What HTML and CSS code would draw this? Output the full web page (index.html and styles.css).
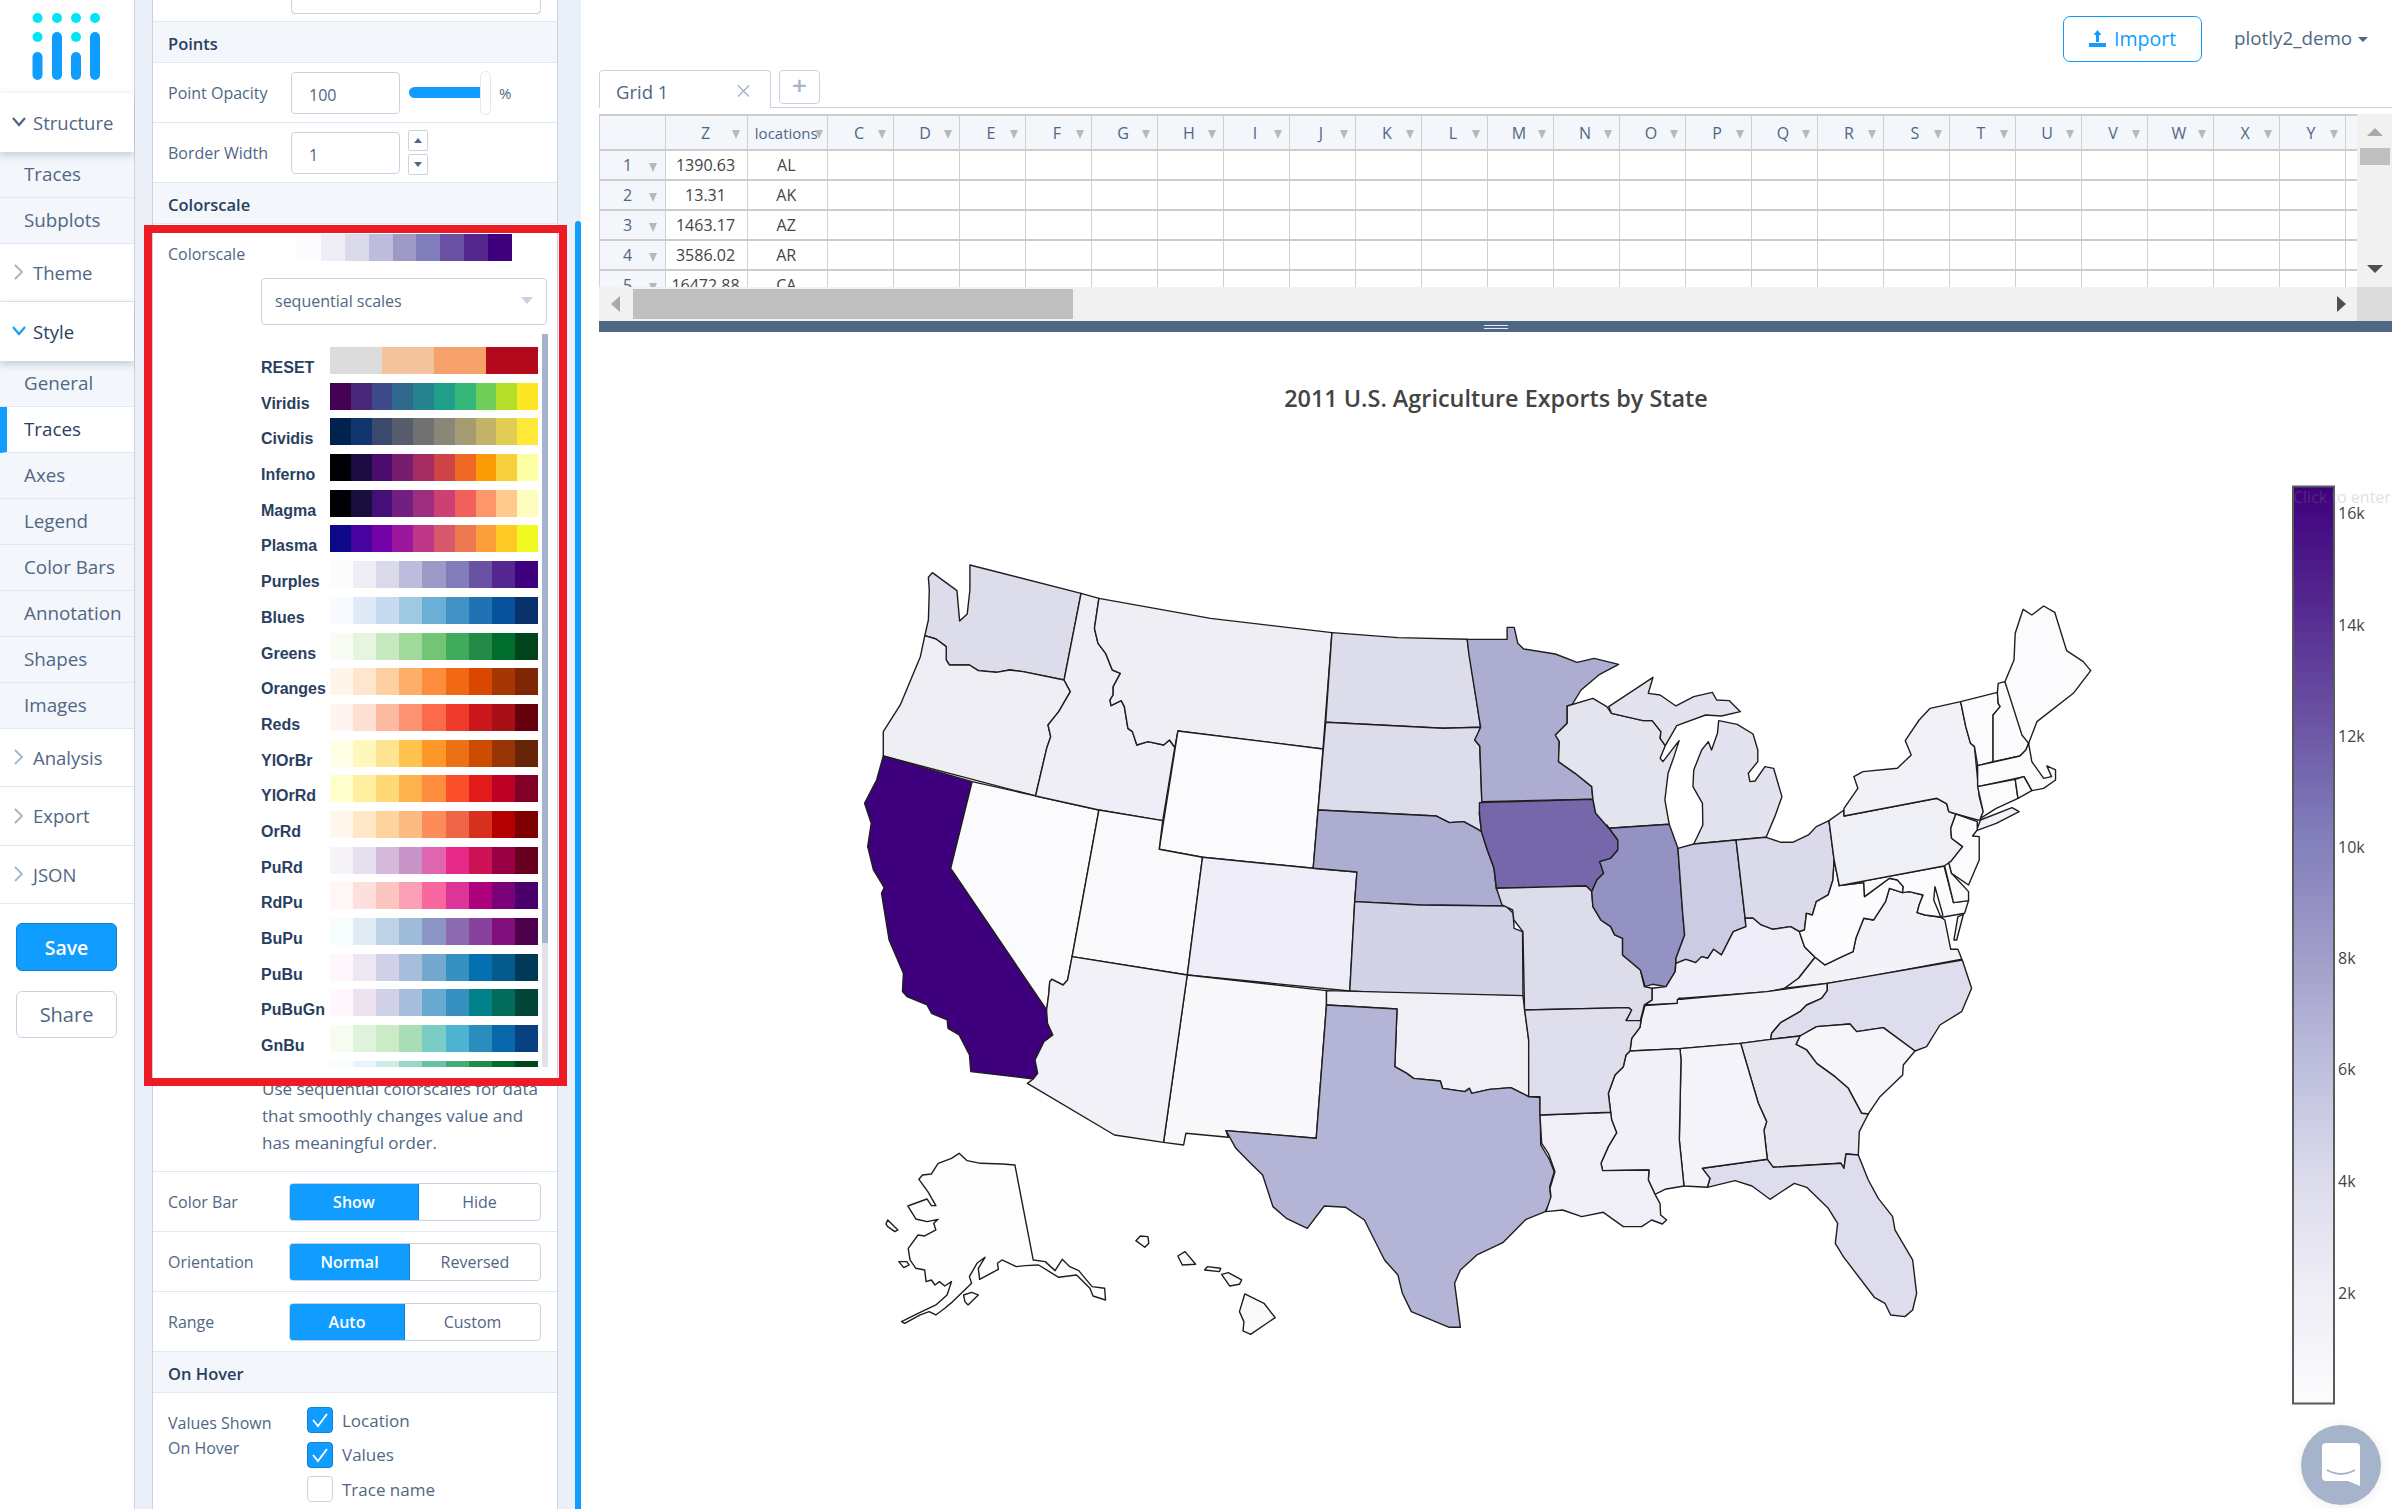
FILE: index.html
```html
<!DOCTYPE html>
<html lang="en">
<head>
    <meta charset="UTF-8">
    <title>Chart Studio</title>
    <link rel="stylesheet" href="styles.css">
</head>
<body>
<div class="app">
    <!-- Left navigation -->
    <nav class="sidebar">
        <div class="logo">
            <svg width="134" height="93" viewBox="0 0 134 93">
                <g fill="#00e5f5">
                    <circle cx="37.5" cy="18" r="5"/><circle cx="57" cy="18" r="5"/><circle cx="76" cy="18" r="5"/><circle cx="95" cy="18" r="5"/>
                    <circle cx="37.5" cy="37" r="5"/><circle cx="76" cy="37" r="5"/>
                </g>
                <g fill="#119dff">
                    <rect x="32.5" y="52" width="10" height="28" rx="5"/><rect x="52" y="32" width="10" height="48" rx="5"/>
                    <rect x="71" y="52" width="10" height="28" rx="5"/><rect x="90" y="32" width="10" height="48" rx="5"/>
                </g>
            </svg>
        </div>
        <div class="nav-head open">
            <svg class="chev" width="16" height="12" viewBox="0 0 16 12"><path d="M2 2l6 7 6-7" fill="none" stroke="#506784" stroke-width="2.2"/></svg>
            Structure
        </div>
        <div class="nav-item">Traces</div>
        <div class="nav-item">Subplots</div>
        <div class="nav-head">
            <svg class="chev" width="16" height="16" viewBox="0 0 16 16"><path d="M4 1l7 7-7 7" fill="none" stroke="#a5b4ca" stroke-width="1.8"/></svg>
            Theme
        </div>
        <div class="nav-head open active">
            <svg class="chev" width="16" height="12" viewBox="0 0 16 12"><path d="M2 2l6 7 6-7" fill="none" stroke="#119dff" stroke-width="2.2"/></svg>
            Style
        </div>
        <div class="nav-item">General</div>
        <div class="nav-item selected">Traces</div>
        <div class="nav-item">Axes</div>
        <div class="nav-item">Legend</div>
        <div class="nav-item">Color Bars</div>
        <div class="nav-item">Annotation</div>
        <div class="nav-item">Shapes</div>
        <div class="nav-item">Images</div>
        <div class="nav-head">
            <svg class="chev" width="16" height="16" viewBox="0 0 16 16"><path d="M4 1l7 7-7 7" fill="none" stroke="#a5b4ca" stroke-width="1.8"/></svg>
            Analysis
        </div>
        <div class="nav-head">
            <svg class="chev" width="16" height="16" viewBox="0 0 16 16"><path d="M4 1l7 7-7 7" fill="none" stroke="#a5b4ca" stroke-width="1.8"/></svg>
            Export
        </div>
        <div class="nav-head">
            <svg class="chev" width="16" height="16" viewBox="0 0 16 16"><path d="M4 1l7 7-7 7" fill="none" stroke="#a5b4ca" stroke-width="1.8"/></svg>
            JSON
        </div>
        <div class="nav-buttons">
            <button class="btn-save">Save</button>
            <button class="btn-share">Share</button>
        </div>
    </nav>

    <!-- Style panel -->
    <aside class="panel">
        <div class="panel-body">
            <div class="stub"><div class="stub-input"></div></div>

            <div class="section-head">Points</div>
            <div class="field">
                <label class="field-label">Point Opacity</label>
                <div class="num-input">100</div>
                <div class="slider-fill"></div>
                <div class="slider-handle"></div>
                <span class="unit">%</span>
            </div>
            <div class="field">
                <label class="field-label">Border Width</label>
                <div class="num-input">1</div>
                <div class="spinner">
                    <span class="spin-btn"><i class="tri-up"></i></span>
                    <span class="spin-btn"><i class="tri-down"></i></span>
                </div>
            </div>

            <div class="section-head">Colorscale</div>
            <div class="colorscale">
                <div class="cs-current">
                    <label class="field-label">Colorscale</label>
                    <div class="cs-swatch purples"></div>
                </div>
                <div class="cs-select">sequential scales <i class="select-arrow"></i></div>
                <div class="cs-list">
                    <div class="cs-rows">
                        <div class="cs-row"><span class="cs-name">RESET</span><div class="cs-bar reset"></div></div>
                        <div class="cs-row"><span class="cs-name">Viridis</span><div class="cs-bar viridis"></div></div>
                        <div class="cs-row"><span class="cs-name">Cividis</span><div class="cs-bar cividis"></div></div>
                        <div class="cs-row"><span class="cs-name">Inferno</span><div class="cs-bar inferno"></div></div>
                        <div class="cs-row"><span class="cs-name">Magma</span><div class="cs-bar magma"></div></div>
                        <div class="cs-row"><span class="cs-name">Plasma</span><div class="cs-bar plasma"></div></div>
                        <div class="cs-row"><span class="cs-name">Purples</span><div class="cs-bar purples"></div></div>
                        <div class="cs-row"><span class="cs-name">Blues</span><div class="cs-bar blues"></div></div>
                        <div class="cs-row"><span class="cs-name">Greens</span><div class="cs-bar greens"></div></div>
                        <div class="cs-row"><span class="cs-name">Oranges</span><div class="cs-bar oranges"></div></div>
                        <div class="cs-row"><span class="cs-name">Reds</span><div class="cs-bar reds"></div></div>
                        <div class="cs-row"><span class="cs-name">YlOrBr</span><div class="cs-bar ylorbr"></div></div>
                        <div class="cs-row"><span class="cs-name">YlOrRd</span><div class="cs-bar ylorrd"></div></div>
                        <div class="cs-row"><span class="cs-name">OrRd</span><div class="cs-bar orrd"></div></div>
                        <div class="cs-row"><span class="cs-name">PuRd</span><div class="cs-bar purd"></div></div>
                        <div class="cs-row"><span class="cs-name">RdPu</span><div class="cs-bar rdpu"></div></div>
                        <div class="cs-row"><span class="cs-name">BuPu</span><div class="cs-bar bupu"></div></div>
                        <div class="cs-row"><span class="cs-name">PuBu</span><div class="cs-bar pubu"></div></div>
                        <div class="cs-row"><span class="cs-name">PuBuGn</span><div class="cs-bar pubugn"></div></div>
                        <div class="cs-row"><span class="cs-name">GnBu</span><div class="cs-bar gnbu"></div></div>
                        <div class="cs-row"><span class="cs-name">BuGn</span><div class="cs-bar bugn"></div></div>
                    </div>
                    <div class="cs-track"><div class="cs-thumb"></div></div>
                </div>
                <p class="cs-note">Use sequential colorscales for data that smoothly changes value and has meaningful order.</p>
            </div>

            <div class="field">
                <label class="field-label">Color Bar</label>
                <div class="toggle">
                    <span class="toggle-on w-show">Show</span><span class="toggle-off">Hide</span>
                </div>
            </div>
            <div class="field">
                <label class="field-label">Orientation</label>
                <div class="toggle">
                    <span class="toggle-on w-normal">Normal</span><span class="toggle-off">Reversed</span>
                </div>
            </div>
            <div class="field">
                <label class="field-label">Range</label>
                <div class="toggle">
                    <span class="toggle-on w-auto">Auto</span><span class="toggle-off">Custom</span>
                </div>
            </div>

            <div class="section-head">On Hover</div>
            <div class="hover-field">
                <label class="hover-label">Values Shown<br>On Hover</label>
                <div class="checks">
                    <div class="check"><span class="box on"><svg width="20" height="20" viewBox="0 0 20 20"><path d="M3 10l5 6 9-12" fill="none" stroke="#fff" stroke-width="1.8"/></svg></span>Location</div>
                    <div class="check"><span class="box on"><svg width="20" height="20" viewBox="0 0 20 20"><path d="M3 10l5 6 9-12" fill="none" stroke="#fff" stroke-width="1.8"/></svg></span>Values</div>
                    <div class="check"><span class="box"></span>Trace name</div>
                </div>
            </div>
        </div>
        <div class="panel-scroll"><div class="panel-thumb"></div></div>
        <!-- Annotation frame drawn over the screenshot -->
        <div class="red-frame"></div>
    </aside>

    <!-- Grid and chart -->
    <main class="main">
        <div class="topbar">
            <button class="btn-import">
                <svg width="17" height="17" viewBox="0 0 17 17"><path d="M0 13h17v4H0zM8.5 0l4 5H10v7H7V5H4.500z" fill="#119dff"/></svg>
                Import
            </button>
            <div class="user">plotly2_demo <i class="tri-down dark"></i></div>
        </div>
        <div class="tabs">
            <div class="tab">Grid 1 <svg width="13" height="12" viewBox="0 0 13 12"><path d="M1 .5l11 11M12 .5l-11 11" fill="none" stroke="#a5b4ca" stroke-width="1.5"/></svg></div>
            <div class="tab-add">+</div>
        </div>
        <div class="sheet">
            <div class="sheet-cells">
                <table>
                    <colgroup><col class="c-row"><col class="c-z"><col class="c-loc"><col span="23" class="c-std"><col class="c-end"></colgroup>
                    <tr class="head-row"><th></th><th>Z<i></i></th><th class="narrow">locations<i></i></th><th>C<i></i></th><th>D<i></i></th><th>E<i></i></th><th>F<i></i></th><th>G<i></i></th><th>H<i></i></th><th>I<i></i></th><th>J<i></i></th><th>K<i></i></th><th>L<i></i></th><th>M<i></i></th><th>N<i></i></th><th>O<i></i></th><th>P<i></i></th><th>Q<i></i></th><th>R<i></i></th><th>S<i></i></th><th>T<i></i></th><th>U<i></i></th><th>V<i></i></th><th>W<i></i></th><th>X<i></i></th><th>Y<i></i></th><th></th></tr>
                    <tr><th class="row-num">1<i></i></th><td>1390.63</td><td>AL</td><td></td><td></td><td></td><td></td><td></td><td></td><td></td><td></td><td></td><td></td><td></td><td></td><td></td><td></td><td></td><td></td><td></td><td></td><td></td><td></td><td></td><td></td><td></td><td></td></tr>
                    <tr><th class="row-num">2<i></i></th><td>13.31</td><td>AK</td><td></td><td></td><td></td><td></td><td></td><td></td><td></td><td></td><td></td><td></td><td></td><td></td><td></td><td></td><td></td><td></td><td></td><td></td><td></td><td></td><td></td><td></td><td></td><td></td></tr>
                    <tr><th class="row-num">3<i></i></th><td>1463.17</td><td>AZ</td><td></td><td></td><td></td><td></td><td></td><td></td><td></td><td></td><td></td><td></td><td></td><td></td><td></td><td></td><td></td><td></td><td></td><td></td><td></td><td></td><td></td><td></td><td></td><td></td></tr>
                    <tr><th class="row-num">4<i></i></th><td>3586.02</td><td>AR</td><td></td><td></td><td></td><td></td><td></td><td></td><td></td><td></td><td></td><td></td><td></td><td></td><td></td><td></td><td></td><td></td><td></td><td></td><td></td><td></td><td></td><td></td><td></td><td></td></tr>
                    <tr><th class="row-num">5<i></i></th><td>16472.88</td><td>CA</td><td></td><td></td><td></td><td></td><td></td><td></td><td></td><td></td><td></td><td></td><td></td><td></td><td></td><td></td><td></td><td></td><td></td><td></td><td></td><td></td><td></td><td></td><td></td><td></td></tr>
                </table>
            </div>
            <div class="vscroll"><i class="arrow-up"></i><div class="vthumb"></div><i class="arrow-down"></i></div>
            <div class="hscroll"><i class="arrow-left"></i><div class="hthumb"></div><i class="arrow-right"></i></div>
            <div class="corner"></div>
        </div>
        <div class="resizer"><div class="grip"></div></div>

        <!-- Chart: viewBox uses page pixels; each map group is in its own scaled coordinates -->
        <svg class="chart" width="1793" height="1177" viewBox="599 332 1793 1177">
            <text class="chart-title" x="1496" y="407" text-anchor="middle">2011 U.S. Agriculture Exports by State</text>

            <g class="states" transform="translate(840 540) scale(.4464 .3333)">
                <polygon fill="#dcdcea" points="291,75 540,160 502,420 410,395 380,390 350,397 310,392 290,375 245,375 238,360 238,320 215,297 190,287 198,240 200,150 198,112 207,98 262,152 268,243 285,222 291,150"/>
                <polygon fill="#efeef5" points="190,287 215,297 238,320 238,360 245,375 290,375 310,392 350,397 380,390 410,395 502,420 516,455 490,515 466,555 472,590 463,625 438,768 97,648 97,575 135,495 180,350"/>
                <polygon fill="#3f007d" points="97,648 296,725 248,985 463,1410 465,1450 477,1485 457,1505 437,1560 443,1600 433,1617 293,1595 290,1545 267,1485 242,1465 240,1440 205,1420 195,1395 150,1370 140,1355 142,1300 110,1200 93,1060 99,1043 75,990 62,920 70,850 55,790 82,720"/>
                <polygon fill="#fbfbfd" points="296,725 580,810 520,1250 510,1320 500,1335 475,1318 470,1325 468,1360 463,1410 248,985"/>
                <polygon fill="#efeef7" points="540,160 580,175 570,265 578,310 595,340 610,390 628,400 612,440 612,465 605,480 607,497 630,482 637,500 645,565 655,575 665,615 690,605 725,615 738,600 750,622 723,842 580,810 438,768 463,625 472,590 466,555 490,515 516,455 502,420"/>
                <polygon fill="#efeef5" points="580,175 830,235 1102,278 1082,627 757,573 750,622 738,600 725,615 690,605 665,615 655,575 645,565 637,500 630,482 607,497 605,480 612,465 612,440 628,400 610,390 595,340 578,310 570,265"/>
                <polygon fill="#fbfbfd" points="757,573 1082,627 1060,985 812,952 715,928"/>
                <polygon fill="#f9f9fc" points="580,810 723,842 715,928 812,952 778,1305 520,1250"/>
                <polygon fill="#efeef8" points="812,952 1060,985 1158,996 1153,1085 1142,1353 778,1305"/>
                <polygon fill="#dcdcea" points="1102,278 1250,293 1405,298 1435,562 1350,565 1088,547"/>
                <polygon fill="#dcdcea" points="1088,547 1350,565 1435,562 1430,580 1422,600 1433,618 1438,785 1432,820 1437,875 1425,865 1397,845 1365,848 1335,828 1071,810"/>
                <polygon fill="#adadd2" points="1071,810 1335,828 1365,848 1397,845 1425,865 1437,875 1450,930 1465,985 1470,1045 1492,1098 1300,1095 1153,1085 1158,996 1060,985"/>
                <polygon fill="#d2d3e7" points="1153,1085 1300,1095 1492,1098 1508,1120 1510,1165 1529,1175 1530,1367 1300,1365 1142,1353"/>
            </g>

            <g class="states" transform="translate(860 1000) scale(.4464 .3333)">
                <polygon fill="#f8f8fb" points="733,-75 1045,-28 1045,15 1022,415 820,392 825,412 730,400 725,435 680,427"/>
                <polygon fill="#f2f1f7" points="475,-130 733,-75 680,427 570,405 375,250 388,237 398,220 392,180 412,125 432,105 420,70 418,30 423,-20 425,-55 430,-62 455,-45 465,-60"/>
                <polygon fill="#f0eff6" points="1045,-28 1485,-13 1498,120 1498,290 1458,263 1410,268 1370,280 1365,265 1355,275 1305,265 1300,243 1240,235 1225,220 1198,200 1203,27 1045,15"/>
                <polygon fill="#b4b4d6" points="1045,15 1203,27 1198,200 1225,220 1240,235 1300,243 1305,265 1355,275 1365,265 1370,280 1410,268 1458,263 1498,290 1523,293 1525,435 1545,480 1555,515 1545,560 1548,600 1535,635 1492,658 1440,728 1382,765 1345,810 1332,850 1345,982 1320,982 1235,935 1215,880 1205,825 1175,780 1130,660 1088,622 1040,618 1002,685 955,655 925,620 902,525 875,490 842,445 820,392 1022,415"/>
                <polygon fill="#fdfdfe" points="347,495 388,780 415,785 437,812 453,778 470,800 490,812 520,860 548,865 550,900 522,888 515,865 485,825 445,832 400,795 370,797 350,800 318,780 308,790 310,808 268,838 265,805 280,772 262,790 245,830 250,850 205,908 190,925 170,945 155,935 135,945 100,970 93,965 130,940 170,915 195,885 205,845 190,858 178,845 168,855 160,840 148,845 145,810 125,805 112,780 108,745 130,705 145,708 170,690 165,670 175,658 150,665 125,657 107,618 150,597 160,617 170,617 152,575 132,538 140,525 160,522 175,490 205,475 222,460 240,482 270,490 320,492"/>
                <polygon fill="#fdfdfe" points="58,672 62,660 85,690 78,695 62,680"/>
                <polygon fill="#fdfdfe" points="87,785 105,785 110,795 98,803"/>
                <polygon fill="#fdfdfe" points="232,885 250,877 265,885 242,915 235,905"/>
                <polygon fill="#f9f8fb" points="618,722 628,708 645,710 647,730 638,742"/>
                <polygon fill="#f9f8fb" points="712,768 728,755 752,793 722,795"/>
                <polygon fill="#f9f8fb" points="772,810 778,800 808,805 805,815"/>
                <polygon fill="#f9f8fb" points="810,823 825,818 855,840 850,853 828,858"/>
                <polygon fill="#f9f8fb" points="850,935 862,882 905,910 930,953 875,1003 858,993 860,965"/>
            </g>

            <g class="states" transform="translate(1500 580) scale(.3954 .3333)">
                <polygon fill="#adadd2" points="-83,178 18,178 18,142 36,142 45,190 60,207 140,222 195,247 238,235 300,253 250,285 205,330 182,375 170,378 170,430 140,465 150,485 148,545 190,580 232,620 235,658 -46,665 -51,498 -64,480 -49,442 -60,360 -71,280 -79,220"/>
                <polygon fill="#7667ab" points="-52,668 235,658 242,700 270,735 298,780 298,810 280,835 252,845 262,880 245,900 232,935 218,918 -9,925 -15,865 -32,810 -47,755 -52,700"/>
                <polygon fill="#dcdcea" points="-9,925 218,918 232,935 235,980 255,1020 280,1040 290,1065 310,1075 310,1125 355,1170 365,1220 385,1225 385,1260 365,1275 355,1322 318,1325 332,1290 325,1283 62,1290 58,1055 35,1020 32,990 5,975"/>
                <polygon fill="#e4e4ef" points="170,378 235,355 270,380 282,400 362,422 385,422 407,455 405,475 418,497 405,535 412,545 453,482 440,530 425,580 417,660 428,733 275,745 242,700 235,658 232,620 190,580 148,545 150,485 140,465 170,430"/>
                <polygon fill="#e3e3ef" points="275,380 387,292 375,340 405,345 445,378 490,350 537,337 548,360 580,362 608,395 560,408 520,405 447,437 418,497 405,475 407,455 385,422 362,422 282,400"/>
                <polygon fill="#e3e3ef" points="553,422 600,433 640,462 652,510 652,545 628,580 632,605 645,603 670,560 692,565 713,650 695,710 673,772 597,780 490,792 513,735 512,670 488,620 490,570 510,510 527,485 535,510 550,460"/>
                <polygon fill="#9491c3" points="275,745 428,733 450,805 462,1000 467,1065 445,1135 443,1175 420,1220 385,1213 367,1220 355,1170 310,1125 310,1075 290,1065 280,1040 255,1020 235,980 232,935 245,900 262,880 252,845 280,835 298,810 298,780 270,735"/>
                <polygon fill="#cbcbe3" points="450,805 490,792 597,780 620,1015 622,1040 590,1055 560,1125 540,1108 525,1135 510,1130 495,1148 470,1138 445,1150 445,1135 467,1065 462,1000"/>
                <polygon fill="#dadaea" points="597,780 673,772 710,787 740,787 780,765 800,740 832,722 845,840 842,900 830,945 800,965 790,1005 775,1000 770,1050 757,1055 735,1040 690,1048 660,1035 640,1015 620,1015"/>
                <polygon fill="#efeef8" points="445,1150 470,1138 495,1148 510,1130 525,1135 540,1108 560,1125 590,1055 622,1040 620,1015 640,1015 660,1035 690,1048 735,1040 757,1055 770,1100 797,1132 755,1195 720,1225 680,1235 462,1255 452,1255 452,1270 367,1275 385,1260 385,1225 420,1220 443,1175"/>
                <polygon fill="#f4f2f9" points="797,1132 822,1155 865,1130 893,1115 900,1075 920,1015 945,1020 975,965 985,925 1018,938 1035,935 1070,945 1060,975 1055,998 1075,1005 1115,1012 1125,1020 1140,1108 1158,1108 1168,1138 930,1190 830,1210 720,1225 755,1195"/>
                <polygon fill="#fcfcfe" points="845,840 858,917 920,908 922,950 985,895 1005,900 1020,920 1018,938 985,925 975,965 945,1020 920,1015 900,1075 893,1115 865,1130 822,1155 797,1132 770,1100 757,1055 770,1050 775,1000 790,1005 800,965 830,945 842,900"/>
                <polygon fill="#fbfbfd" points="858,917 1123,858 1147,968 1185,962 1175,1000 1118,1012 1075,1005 1055,998 1060,975 1070,945 1035,935 1018,938 1020,920 1005,900 985,895 922,950 920,908"/>
                <polygon fill="#fff" points="1100,920 1120,1005 1115,1012 1097,960"/>
                <polygon fill="#f4f2f9" points="1158,1010 1172,1003 1155,1080 1148,1080"/>
                <polygon fill="#fbfbfd" points="1123,850 1135,847 1142,880 1185,935 1185,962 1147,968"/>
                <polygon fill="#efeff6" points="832,722 870,690 870,708 1105,655 1130,672 1135,695 1153,702 1140,745 1142,775 1170,800 1140,845 1123,858 858,917 845,840"/>
                <polygon fill="#f3f1f8" points="870,708 870,685 905,625 895,590 918,575 1005,565 1040,525 1025,482 1060,420 1088,385 1165,365 1178,440 1190,490 1200,500 1212,650 1222,695 1215,720 1208,720 1153,702 1135,695 1130,672 1105,655"/>
                <polygon fill="#f3f1f8" points="1215,720 1295,683 1313,695 1255,730 1205,752"/>
                <polygon fill="#fbfbfd" points="1153,702 1207,725 1207,750 1195,768 1212,770 1212,840 1185,915 1142,880 1135,847 1140,845 1170,800 1142,775 1140,745"/>
                <polygon fill="#fbfbfd" points="1165,365 1258,337 1260,370 1265,380 1247,405 1247,545 1208,557 1200,500 1190,490 1178,440"/>
                <polygon fill="#fbfbfd" points="1258,337 1260,310 1277,305 1337,490 1330,510 1315,528 1247,545 1247,405 1265,380 1260,370"/>
                <polygon fill="#fbfbfd" points="1277,305 1300,240 1303,160 1323,88 1345,105 1375,78 1403,97 1433,212 1475,245 1494,272 1450,340 1358,425 1337,490 1320,465"/>
                <polygon fill="#fbfbfd" points="1208,557 1315,528 1330,510 1337,490 1345,545 1375,595 1395,590 1383,558 1405,570 1405,600 1375,625 1345,632 1325,590 1208,620"/>
                <polygon fill="#fbfbfd" points="1208,620 1303,598 1310,655 1255,685 1215,715 1222,695"/>
                <polygon fill="#fbfbfd" points="1303,598 1325,590 1345,632 1310,655"/>
            </g>

            <g class="states" transform="translate(1540 950) scale(.3333)">
                <polygon fill="#f2f2f8" points="315,167 412,160 412,148 428,148 430,147 680,125 862,100 862,122 845,145 800,165 780,185 722,218 695,250 692,268 602,280 420,296 270,303 275,265 300,232 303,212"/>
                <polygon fill="#dddded" points="862,100 1267,30 1295,115 1265,185 1200,225 1160,290 1125,303 1030,233 950,245 930,222 830,230 780,258 692,268 695,250 722,218 780,185 800,165 845,145 862,122"/>
                <polygon fill="#f6f5fa" points="780,258 830,230 930,222 950,245 1030,233 1125,303 1090,345 1088,375 1020,440 985,492 965,490 925,415 885,380 830,340 800,300 768,283"/>
                <polygon fill="#e6e5f0" points="602,280 692,268 780,258 768,283 800,300 830,340 885,380 925,415 965,490 985,492 958,545 955,615 918,612 912,655 903,640 700,652 682,628 672,540 680,515 655,460"/>
                <polygon fill="#dddded" points="487,655 682,628 700,652 903,640 912,655 918,612 955,615 985,690 1015,745 1058,800 1065,840 1118,930 1130,1030 1118,1080 1095,1100 1052,1095 1035,1060 1003,1042 910,920 886,880 893,820 865,775 800,712 763,700 690,748 636,708 585,692 502,712 510,685"/>
                <polygon fill="#f3f3f9" points="420,296 602,280 655,460 680,515 672,540 682,628 487,655 510,685 502,712 432,708 418,570 423,330"/>
                <polygon fill="#f1f0f8" points="270,303 420,296 423,330 418,570 432,708 375,718 345,733 325,690 327,660 188,662 183,640 205,590 230,548 215,510 212,487 205,430 225,375 250,350 258,315"/>
                <polygon fill="#f0eff8" points="0,495 212,487 215,510 230,548 205,590 183,640 188,662 327,660 325,690 345,733 360,760 362,795 380,810 367,822 335,810 305,830 250,830 190,787 125,800 68,780 18,785 33,740 30,715 45,665 25,610 5,580"/>
                <polygon fill="#dfdeed" points="-46,180 265,173 275,180 258,212 303,212 300,232 275,265 270,303 258,315 250,350 225,375 205,430 212,487 0,495 0,440 -34,440 -34,270"/>
            </g>

            <!-- Color bar -->
            <defs>
                <linearGradient id="purples" x1="0" y1="1" x2="0" y2="0">
                    <stop offset="0" stop-color="#fcfbfd"/><stop offset=".125" stop-color="#efedf5"/><stop offset=".25" stop-color="#dadaeb"/>
                    <stop offset=".375" stop-color="#bcbddc"/><stop offset=".5" stop-color="#9e9ac8"/><stop offset=".625" stop-color="#807dba"/>
                    <stop offset=".75" stop-color="#6a51a3"/><stop offset=".875" stop-color="#54278f"/><stop offset="1" stop-color="#3f007d"/>
                </linearGradient>
            </defs>
            <rect class="colorbar" x="2293" y="486.5" width="41" height="917" fill="url(#purples)"/>
            <text class="bar-hint" x="2293" y="503">Click to enter</text>
            <g class="bar-ticks">
                <text x="2338" y="519">16k</text>
                <text x="2338" y="631">14k</text>
                <text x="2338" y="742">12k</text>
                <text x="2338" y="853">10k</text>
                <text x="2338" y="964">8k</text>
                <text x="2338" y="1075">6k</text>
                <text x="2338" y="1187">4k</text>
                <text x="2338" y="1299">2k</text>
            </g>
        </svg>
    </main>
</div>

<!-- Chat launcher -->
<div class="chat">
    <svg width="40" height="44" viewBox="0 0 40 44">
        <path d="M5 0h30a4 4 0 0 1 4 4v39l-12-5H5a4 4 0 0 1-4-4V4a4 4 0 0 1 4-4z" fill="#fff"/>
        <path d="M6 27c9 5 19 5 28 0" fill="none" stroke="#a5b4ca" stroke-width="2"/>
    </svg>
</div>
</body>
</html>
```

FILE: styles.css
```css
* {
    box-sizing: border-box;
}
html, body {
    margin: 0;
    height: 100%;
    overflow: hidden;
}
body {
    font-family: "Open Sans", sans-serif;
    color: #506784;
    background: #fff;
}
button {
    font-family: inherit;
    cursor: pointer;
}
.app {
    display: flex;
    height: 100vh;
}

/* Left navigation */
.sidebar {
    width: 135px;
    flex: none;
    background: #fff;
    border-right: 1px solid #c8d4e3;
}
.logo {
    height: 93px;
}
.logo svg {
    display: block;
}
.nav-head {
    height: 58.5px;
    display: flex;
    align-items: center;
    gap: 6px;
    padding-left: 11px;
    font-size: 18.5px;
    background: #fff;
    border-bottom: 1px solid #dfe8f3;
}
.nav-head.open {
    border-bottom: none;
    box-shadow: 0 3px 8px rgba(80, 103, 132, 0.3);
    position: relative;
}
.nav-head.active {
    color: #2a3f5f;
    font-weight: 500;
}
.chev {
    flex: none;
}
.nav-item {
    height: 46px;
    display: flex;
    align-items: center;
    padding-left: 24px;
    font-size: 18.8px;
    background: #f3f6fb;
    border-bottom: 1px solid #dfe8f3;
}
.nav-item.selected {
    background: #fff;
    color: #2a3f5f;
    font-weight: 500;
    padding-left: 17px;
    border-left: 7px solid #119dff;
}
.nav-buttons {
    display: flex;
    flex-direction: column;
    gap: 20px;
    padding: 19px 16px 0;
}
.btn-save, .btn-share {
    width: 101px;
    border-radius: 6px;
}
.btn-save {
    height: 48px;
    font-size: 19.5px;
    background: #119dff;
    border: 1px solid #0d84d6;
    color: #fff;
    font-weight: 600;
}
.btn-share {
    height: 47px;
    font-size: 20px;
    background: #fff;
    border: 1px solid #c8d4e3;
    color: #506784;
    font-weight: 500;
}

/* Style panel */
.panel {
    width: 446px;
    flex: none;
    display: flex;
    position: relative;
    padding-left: 17px;
    background: #ebf0f8;
}
.panel-body {
    width: 406px;
    height: 100%;
    background: #fff;
    border-left: 1px solid #c8d4e3;
    border-right: 1px solid #c8d4e3;
    overflow: hidden;
}
.panel-scroll {
    width: 6px;
    margin-left: 17px;
}
.panel-thumb {
    margin-top: 221px;
    height: 1288px;
    background: #119dff;
    border-radius: 3px 3px 0 0;
}
.red-frame {
    position: absolute;
    left: 9px;
    top: 225px;
    width: 423px;
    height: 861px;
    border: 8px solid #ed1c24;
    pointer-events: none;
}
.stub {
    height: 22px;
    padding-left: 138px;
    border-bottom: 1px solid #dfe8f3;
}
.stub-input {
    width: 250px;
    height: 14px;
    border: 1px solid #c8d4e3;
    border-top: none;
    border-radius: 0 0 4px 4px;
}
.section-head {
    height: 41px;
    display: flex;
    align-items: center;
    padding: 3px 0 0 15px;
    font-size: 16.5px;
    font-weight: 600;
    color: #2a3f5f;
    background: #f3f6fb;
    border-bottom: 1px solid #dfe8f3;
}
.field {
    height: 60px;
    display: flex;
    align-items: center;
    padding-left: 15px;
    border-bottom: 1px solid #dfe8f3;
}
.field-label {
    width: 122px;
    flex: none;
    font-size: 16px;
}
.num-input {
    width: 109px;
    height: 42px;
    margin-left: 1px;
    padding: 6px 0 0 17px;
    font-size: 16px;
    line-height: 32px;
    border: 1px solid #c8d4e3;
    border-radius: 4px;
}
.slider-fill {
    width: 71px;
    height: 11px;
    margin-left: 9px;
    background: #119dff;
    border-radius: 6px 0 0 6px;
}
.slider-handle {
    width: 11px;
    height: 44px;
    background: #fff;
    border: 1px solid #dfe8f3;
    border-radius: 6px;
}
.unit {
    margin-left: 8px;
    font-size: 15px;
}
.spinner {
    display: flex;
    flex-direction: column;
    gap: 3px;
    margin-left: 8px;
}
.spin-btn {
    width: 20px;
    height: 21px;
    display: flex;
    align-items: center;
    justify-content: center;
    border: 1px solid #c8d4e3;
    border-radius: 2px;
}
.tri-up, .tri-down {
    display: inline-block;
    border-left: 4px solid transparent;
    border-right: 4px solid transparent;
}
.tri-up {
    border-bottom: 5px solid #506784;
}
.tri-down {
    border-top: 5px solid #506784;
}
.tri-down.dark {
    border-left-width: 5px;
    border-right-width: 5px;
    vertical-align: middle;
    margin-left: 1px;
}

/* Colorscale picker */
.colorscale {
    border-bottom: 1px solid #dfe8f3;
    padding-top: 10px;
}
.cs-current {
    display: flex;
    padding-left: 15px;
}
.cs-current .field-label {
    padding-top: 11px;
    line-height: 19px;
    height: 27px;
}
.cs-swatch {
    width: 215px;
    height: 27px;
    margin-left: 7px;
}
.cs-select {
    position: relative;
    width: 286px;
    height: 47px;
    margin: 17px 0 9px 108px;
    padding-left: 13px;
    font-size: 16px;
    line-height: 45px;
    border: 1px solid #c8d4e3;
    border-radius: 4px;
}
.select-arrow {
    position: absolute;
    right: 13px;
    top: 18px;
    border-left: 6px solid transparent;
    border-right: 6px solid transparent;
    border-top: 7px solid #c8d4e3;
}
.cs-list {
    height: 733px;
    margin-left: 108px;
    display: flex;
    overflow: hidden;
}
.cs-rows {
    width: 277px;
    padding-top: 13px;
    display: flex;
    flex-direction: column;
    gap: 8.7px;
}
.cs-row {
    display: flex;
    flex: none;
    height: 27px;
}
.cs-name {
    width: 69px;
    flex: none;
    align-self: flex-end;
    margin-bottom: -2px;
    font-family: "Liberation Sans", Arial, sans-serif;
    font-size: 16px;
    line-height: 16px;
    font-weight: 700;
    color: #2a3f5f;
}
.cs-bar {
    flex: 1;
}
.cs-track {
    width: 6px;
    margin-left: 4px;
    background: #dfe4ec;
}
.cs-thumb {
    height: 609px;
    background: #a5b4ca;
}
.cs-note {
    width: 288px;
    margin: 8px 0 15px 109px;
    font-size: 17px;
    line-height: 27px;
}
.reset { background: linear-gradient(90deg, #dcdcdc 25%, #f4c29d 0 50%, #f5a169 0 75%, #b20a1c 0); }
.viridis { background: linear-gradient(90deg, #440154 10%, #482878 0 20%, #3e4989 0 30%, #31688e 0 40%, #26828e 0 50%, #1f9e89 0 60%, #35b779 0 70%, #6ece58 0 80%, #b5de2b 0 90%, #fde725 0); }
.cividis { background: linear-gradient(90deg, #00224e 10%, #123570 0 20%, #3b496c 0 30%, #575d6d 0 40%, #707173 0 50%, #8a8678 0 60%, #a59c74 0 70%, #c3b369 0 80%, #e1cc55 0 90%, #fee838 0); }
.inferno { background: linear-gradient(90deg, #000004 10%, #1b0c41 0 20%, #4a0c6b 0 30%, #781c6d 0 40%, #a52c60 0 50%, #cf4446 0 60%, #ed6925 0 70%, #fb9b06 0 80%, #f7d13d 0 90%, #fcffa4 0); }
.magma { background: linear-gradient(90deg, #000004 10%, #180f3d 0 20%, #440f76 0 30%, #721f81 0 40%, #9e2f7f 0 50%, #cd4071 0 60%, #f1605d 0 70%, #fd9668 0 80%, #feca8d 0 90%, #fcfdbf 0); }
.plasma { background: linear-gradient(90deg, #0d0887 10%, #46039f 0 20%, #7201a8 0 30%, #9c179e 0 40%, #bd3786 0 50%, #d8576b 0 60%, #ed7953 0 70%, #fb9f3a 0 80%, #fdca26 0 90%, #f0f921 0); }
.purples { background: linear-gradient(90deg, #fcfbfd 11.11%, #efedf5 0 22.22%, #dadaeb 0 33.33%, #bcbddc 0 44.44%, #9e9ac8 0 55.55%, #807dba 0 66.66%, #6a51a3 0 77.77%, #54278f 0 88.88%, #3f007d 0); }
.blues { background: linear-gradient(90deg, #f7fbff 11.11%, #deebf7 0 22.22%, #c6dbef 0 33.33%, #9ecae1 0 44.44%, #6baed6 0 55.55%, #4292c6 0 66.66%, #2171b5 0 77.77%, #08519c 0 88.88%, #08306b 0); }
.greens { background: linear-gradient(90deg, #f7fcf5 11.11%, #e5f5e0 0 22.22%, #c7e9c0 0 33.33%, #a1d99b 0 44.44%, #74c476 0 55.55%, #41ab5d 0 66.66%, #238b45 0 77.77%, #006d2c 0 88.88%, #00441b 0); }
.oranges { background: linear-gradient(90deg, #fff5eb 11.11%, #fee6ce 0 22.22%, #fdd0a2 0 33.33%, #fdae6b 0 44.44%, #fd8d3c 0 55.55%, #f16913 0 66.66%, #d94801 0 77.77%, #a63603 0 88.88%, #7f2704 0); }
.reds { background: linear-gradient(90deg, #fff5f0 11.11%, #fee0d2 0 22.22%, #fcbba1 0 33.33%, #fc9272 0 44.44%, #fb6a4a 0 55.55%, #ef3b2c 0 66.66%, #cb181d 0 77.77%, #a50f15 0 88.88%, #67000d 0); }
.ylorbr { background: linear-gradient(90deg, #ffffe5 11.11%, #fff7bc 0 22.22%, #fee391 0 33.33%, #fec44f 0 44.44%, #fe9929 0 55.55%, #ec7014 0 66.66%, #cc4c02 0 77.77%, #993404 0 88.88%, #662506 0); }
.ylorrd { background: linear-gradient(90deg, #ffffcc 11.11%, #ffeda0 0 22.22%, #fed976 0 33.33%, #feb24c 0 44.44%, #fd8d3c 0 55.55%, #fc4e2a 0 66.66%, #e31a1c 0 77.77%, #bd0026 0 88.88%, #800026 0); }
.orrd { background: linear-gradient(90deg, #fff7ec 11.11%, #fee8c8 0 22.22%, #fdd49e 0 33.33%, #fdbb84 0 44.44%, #fc8d59 0 55.55%, #ef6548 0 66.66%, #d7301f 0 77.77%, #b30000 0 88.88%, #7f0000 0); }
.purd { background: linear-gradient(90deg, #f7f4f9 11.11%, #e7e1ef 0 22.22%, #d4b9da 0 33.33%, #c994c7 0 44.44%, #df65b0 0 55.55%, #e7298a 0 66.66%, #ce1256 0 77.77%, #980043 0 88.88%, #67001f 0); }
.rdpu { background: linear-gradient(90deg, #fff7f3 11.11%, #fde0dd 0 22.22%, #fcc5c0 0 33.33%, #fa9fb5 0 44.44%, #f768a1 0 55.55%, #dd3497 0 66.66%, #ae017e 0 77.77%, #7a0177 0 88.88%, #49006a 0); }
.bupu { background: linear-gradient(90deg, #f7fcfd 11.11%, #e0ecf4 0 22.22%, #bfd3e6 0 33.33%, #9ebcda 0 44.44%, #8c96c6 0 55.55%, #8c6bb1 0 66.66%, #88419d 0 77.77%, #810f7c 0 88.88%, #4d004b 0); }
.pubu { background: linear-gradient(90deg, #fff7fb 11.11%, #ece7f2 0 22.22%, #d0d1e6 0 33.33%, #a6bddb 0 44.44%, #74a9cf 0 55.55%, #3690c0 0 66.66%, #0570b0 0 77.77%, #045a8d 0 88.88%, #023858 0); }
.pubugn { background: linear-gradient(90deg, #fff7fb 11.11%, #ece2f0 0 22.22%, #d0d1e6 0 33.33%, #a6bddb 0 44.44%, #67a9cf 0 55.55%, #3690c0 0 66.66%, #02818a 0 77.77%, #016c59 0 88.88%, #014636 0); }
.gnbu { background: linear-gradient(90deg, #f7fcf0 11.11%, #e0f3db 0 22.22%, #ccebc5 0 33.33%, #a8ddb5 0 44.44%, #7bccc4 0 55.55%, #4eb3d3 0 66.66%, #2b8cbe 0 77.77%, #0868ac 0 88.88%, #084081 0); }
.bugn { background: linear-gradient(90deg, #f7fcfd 11.11%, #e5f5f9 0 22.22%, #ccece6 0 33.33%, #99d8c9 0 44.44%, #66c2a4 0 55.55%, #41ae76 0 66.66%, #238b45 0 77.77%, #006d2c 0 88.88%, #00441b 0); }

/* Toggles */
.toggle {
    width: 252px;
    height: 38px;
    display: flex;
    font-size: 16px;
    text-align: center;
    line-height: 36px;
    margin-left: -1px;
    border: 1px solid #c8d4e3;
    border-radius: 4px;
    overflow: hidden;
}
.toggle-on {
    margin: -1px 0 -1px -1px;
    background: #119dff;
    border: 1px solid #0d84d6;
    border-radius: 4px 0 0 4px;
    color: #fff;
    font-weight: 600;
}
.toggle-off {
    flex: 1;
}
.w-show { width: 130px; }
.w-normal { width: 121px; }
.w-auto { width: 116px; }

/* On Hover */
.hover-field {
    display: flex;
    padding: 14px 0 0 15px;
}
.hover-label {
    width: 139px;
    flex: none;
    padding-top: 4px;
    font-size: 16px;
    line-height: 25px;
}
.checks {
    display: flex;
    flex-direction: column;
    gap: 8.5px;
}
.check {
    display: flex;
    align-items: center;
    gap: 9px;
    height: 26px;
    font-size: 17px;
}
.box {
    width: 26px;
    height: 26px;
    display: flex;
    align-items: center;
    justify-content: center;
    border: 1px solid #c8d4e3;
    border-radius: 4px;
}
.box.on {
    background: #119dff;
    border-color: #0d84d6;
}

/* Main area */
.main {
    flex: 1;
    min-width: 0;
    padding: 0 7px 0 18px;
}
.topbar {
    height: 70px;
    display: flex;
    justify-content: flex-end;
    padding: 16px 24px 0 0;
}
.btn-import {
    width: 139px;
    height: 46px;
    display: flex;
    align-items: center;
    justify-content: center;
    gap: 8px;
    padding-bottom: 2px;
    margin-right: 1px;
    font-size: 19.5px;
    color: #119dff;
    background: #fff;
    border: 1px solid #119dff;
    border-radius: 7px;
}
.user {
    margin-left: 31px;
    font-size: 18.8px;
    line-height: 44px;
    color: #506784;
}
.tabs {
    height: 38px;
    display: flex;
    align-items: flex-start;
    gap: 8px;
    border-bottom: 1px solid #c8d4e3;
}
.tab {
    width: 172px;
    height: 38px;
    display: flex;
    align-items: center;
    justify-content: space-between;
    padding: 3px 20px 0 16px;
    font-size: 18.5px;
    background: #fff;
    border: 1px solid #c8d4e3;
    border-bottom: none;
    border-radius: 4px 4px 0 0;
}
.tab-add {
    width: 41px;
    height: 34px;
    font-size: 26px;
    line-height: 28px;
    font-weight: 600;
    text-align: center;
    color: #a5b4ca;
    border: 1px solid #c8d4e3;
    border-radius: 4px;
}

/* Data grid */
.sheet {
    margin-top: 6px;
    display: grid;
    grid-template-columns: 1758px 35px;
    grid-template-rows: 173px 34px;
}
.sheet-cells {
    overflow: hidden;
}
.sheet table {
    width: 1758px;
    table-layout: fixed;
    border-collapse: collapse;
    font-size: 16px;
    color: #444;
}
.c-row { width: 66px; }
.c-z { width: 82px; }
.c-loc { width: 79.5px; }
.c-std { width: 66px; }
.c-end { width: 12.5px; }
.sheet tr {
    height: 30px;
}
.sheet tr.head-row {
    height: 35px;
}
.sheet th, .sheet td {
    position: relative;
    padding: 0 2px 0 0;
    text-align: center;
    white-space: nowrap;
    overflow: hidden;
    border: 1px solid #d0d0d0;
    border-bottom: 2px solid #ccc;
}
.sheet th {
    font-weight: 400;
    color: #506784;
    background: #f3f6fb;
}
.head-row th {
    border-top: 2px solid #ccc;
}
.sheet th i {
    position: absolute;
    right: 7px;
    top: 14px;
    border-left: 4px solid transparent;
    border-right: 4px solid transparent;
    border-top: 9px solid #b8b8b8;
}
.sheet th.narrow {
    font-size: 15px;
}
.sheet th.narrow i {
    right: 4px;
}
.sheet .row-num {
    padding-right: 10px;
}
.sheet .row-num i {
    right: 8px;
    top: 12px;
}
.vscroll {
    display: flex;
    flex-direction: column;
    align-items: center;
    padding: 14px 0;
    background: #f1f1f1;
}
.vthumb {
    width: 30px;
    height: 17px;
    margin-top: 12px;
    background: #bfbfbf;
}
.arrow-up, .arrow-down {
    border-left: 8px solid transparent;
    border-right: 8px solid transparent;
}
.arrow-up {
    border-bottom: 8px solid #a9a9a9;
}
.arrow-down {
    margin-top: auto;
    border-top: 8px solid #505050;
}
.hscroll {
    display: flex;
    align-items: center;
    padding: 0 11px 0 12px;
    background: #f1f1f1;
}
.hthumb {
    width: 440px;
    height: 30px;
    margin-left: 13px;
    background: #bfbfbf;
}
.arrow-left, .arrow-right {
    border-top: 8px solid transparent;
    border-bottom: 8px solid transparent;
}
.arrow-left {
    border-right: 9px solid #a9a9a9;
}
.arrow-right {
    margin-left: auto;
    border-left: 9px solid #505050;
}
.corner {
    background: #dcdcdc;
}
.resizer {
    height: 11px;
    display: flex;
    justify-content: center;
    align-items: center;
    background: #506784;
}
.grip {
    width: 24px;
    height: 4px;
    border-top: 1px solid #dfe8f3;
    border-bottom: 1px solid #dfe8f3;
}

/* Chart */
.chart {
    display: block;
}
.chart-title {
    font-size: 23.4px;
    font-weight: 600;
    fill: #444;
}
.states polygon {
    stroke: #1e1e1e;
    stroke-width: 1.4px;
    stroke-linejoin: round;
    vector-effect: non-scaling-stroke;
}
.colorbar {
    stroke: #5a5a5a;
    stroke-width: 2px;
}
.bar-hint {
    font-size: 16px;
    fill: #888;
    opacity: 0.25;
}
.bar-ticks text {
    font-size: 16px;
    fill: #444;
}

/* Chat launcher */
.chat {
    position: fixed;
    right: 18px;
    bottom: 4px;
    width: 80px;
    height: 80px;
    padding: 18px 0 0 20px;
    border-radius: 50%;
    background: #a5b4ca;
    box-shadow: 0 1px 12px rgba(0, 0, 0, 0.08);
}
.chat svg {
    display: block;
}
```
